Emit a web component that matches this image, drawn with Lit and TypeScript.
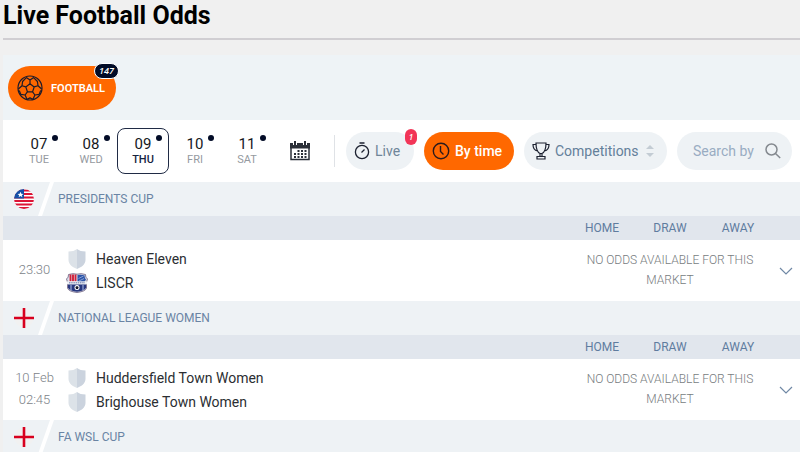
import { LitElement, html, css, svg, nothing } from "lit";
import { customElement, property, state } from "lit/decorators.js";
import { classMap } from "lit/directives/class-map.js";

interface Match { time: string[]; teams: { name: string; crest: string }[]; }
interface League { name: string; flag: string; matches: Match[]; }

const DAYS = [
  { num: "07", day: "TUE" },
  { num: "08", day: "WED" },
  { num: "09", day: "THU" },
  { num: "10", day: "FRI" },
  { num: "11", day: "SAT" },
];

const LEAGUES: League[] = [
  {
    name: "PRESIDENTS CUP",
    flag: "liberia",
    matches: [{ time: ["23:30"], teams: [{ name: "Heaven Eleven", crest: "shield" }, { name: "LISCR", crest: "liscr" }] }],
  },
  {
    name: "NATIONAL LEAGUE WOMEN",
    flag: "england",
    matches: [{ time: ["10 Feb", "02:45"], teams: [{ name: "Huddersfield Town Women", crest: "shield" }, { name: "Brighouse Town Women", crest: "shield" }] }],
  },
  { name: "FA WSL CUP", flag: "england", matches: [] },
];

const ballIcon = html`<svg width="26" height="26" viewBox="0 0 26 26" fill="none" stroke="#1b1b2b" stroke-width="1.2" stroke-linejoin="round" aria-hidden="true">
  <circle cx="13" cy="13" r="12"/>
  <path d="M13 8.8l4.2 3.1-1.6 4.9h-5.2l-1.6-4.9zM13 8.8V4.9M17.2 11.9l3.8-1.2M15.6 16.8l2.3 3.2M10.4 16.8L8.1 20M8.8 11.9L5 10.7M13 4.9L9.3 2.6M13 4.9l3.7-2.3M21 10.7l-.6-4.2-3.7-3.9M21 10.7l3.6 3.3M17.9 20l4.2-.6 1.6-4M17.9 20l-2 4.4M8.1 20l-4.2-.6-1.7-4M8.1 20l2 4.4M5 10.7l.6-4.2 3.7-3.9M5 10.7L1.4 14M10.1 24.4l2.9-1.5 2.9 1.5"/>
</svg>`;

const calendarIcon = html`<svg width="20" height="20" viewBox="0 0 20 20" aria-hidden="true">
  <path d="M1 4.5h18V18.500H1z" fill="#fff" stroke="#2b2f38" stroke-width="1.500"/>
  <path d="M0 2h20v5.500H0z" fill="#2b2f38"/>
  <path d="M5 0v4M15 0v4" stroke="#fff" stroke-width="4"/>
  <path d="M5 0v4M15 0v4" stroke="#2b2f38" stroke-width="2"/>
  <path d="M7.500 10h9M4 13h12.500M4 16h12.500" stroke="#2b2f38" stroke-width="2" stroke-dasharray="2 1.500"/>
</svg>`;

const stopwatchIcon = html`<svg width="16" height="18" viewBox="0 0 16 18" fill="none" stroke="#1c2130" stroke-width="1.300" aria-hidden="true">
  <circle cx="8" cy="10" r="6.600"/><path d="M5.500 1h5M7.500 10.500l3-3"/>
</svg>`;

const clockIcon = html`<svg width="18" height="18" viewBox="0 0 18 18" fill="none" stroke="#2a1a1c" stroke-width="1.400" aria-hidden="true">
  <circle cx="9" cy="9" r="7.700"/><path d="M8.500 4v5.500l3 3"/>
</svg>`;

const trophyIcon = html`<svg width="18" height="18" viewBox="0 0 18 18" fill="none" stroke="#1c2130" stroke-width="1.200" aria-hidden="true">
  <path d="M4 1h10c0 5-1 9-4 10.500H8C5 10 4 6 4 1zM4 2.500H1c0 4 1.500 6 4.500 6.500M14 2.500h3c0 4-1.500 6-4.500 6.500M8 11.500v3M10 11.500v3M5 14.500h8v2.500H5z"/>
</svg>`;

const sortIcon = html`<svg class="sort" width="8" height="12" viewBox="0 0 8 12" fill="#c3ccd4" aria-hidden="true">
  <path d="M4 0l4 4H0zM0 8h8l-4 4z"/>
</svg>`;

const searchIcon = html`<svg width="16" height="16" viewBox="0 0 16 16" fill="none" stroke="#84898f" stroke-width="1.500" aria-hidden="true">
  <circle cx="6.500" cy="6.500" r="5.500"/><path d="M10.500 10.500l4.700 4.500"/>
</svg>`;

const chevronIcon = html`<svg width="14" height="8" viewBox="0 0 14 8" fill="none" stroke="#7088a5" stroke-width="1.200" aria-hidden="true">
  <path d="M1 1l6 6 6-6"/>
</svg>`;

const liberiaFlag = html`<svg width="20" height="20" viewBox="0 0 20 20" aria-hidden="true">
  <clipPath id="disc"><circle cx="10" cy="10" r="10"/></clipPath>
  <g clip-path="url(#disc)">
    <path d="M0 0h20v20H0z" fill="#fff"/>
    <path d="M0 1.500h20M0 5h20M0 8.500h20M0 12h20M0 15.500h20M0 19h20" stroke="#dc1435" stroke-width="1.900"/>
    <path d="M0 0h10v9.500H0z" fill="#1450a8"/>
    <path d="M6.500 2.800l.8 2 2.200.1-1.700 1.300.6 2.100-1.900-1.200-1.900 1.200.6-2.100-1.700-1.300 2.200-.1z" fill="#fff"/>
  </g>
</svg>`;

const englandFlag = html`<svg width="20" height="20" viewBox="0 0 20 20" aria-hidden="true">
  <circle cx="10" cy="10" r="9.500" fill="#f1f1f1"/>
  <path d="M8.700 0h2.600v20H8.700zM0 8.700h20v2.600H0z" fill="#d8001e"/>
</svg>`;

const shieldCrest = html`<svg width="22" height="20" viewBox="0 0 22 20" aria-hidden="true">
  <path d="M11 0C9 1.700 6 2.500 2.500 2.500V11c0 4.500 4.500 7.500 8.500 9z" fill="#dce2e8"/>
  <path d="M11 0c2 1.700 5 2.500 8.500 2.500V11c0 4.500-4.500 7.500-8.500 9z" fill="#cbd3de"/>
</svg>`;

const stripes = [4.5, 7, 9.5].map((x) => svg`<path d="M${x} 1.500v7" stroke="#d0203a" stroke-width="1.900"/>`);
const liscrCrest = html`<svg width="22" height="20" viewBox="0 0 22 20" aria-hidden="true">
  <path d="M2.500 1.500Q7 0 11 1.200 15 0 19.500 1.500q-.3 3 2 4.500l-1 3v6q-1 3.500-9.500 4.500-8.500-1-9.500-4.500V9L.5 6q2.300-1.500 2-4.500z" fill="#dde1ec" stroke="#67597a" stroke-width=".8"/>
  ${stripes}
  <path d="M11.500 2q4-.5 7 .2 0 3 1.500 4.300L18.500 9h-7z" fill="#2d55a8"/>
  <path d="M12.500 5.500l5-2.500M13 8l5-2.500" stroke="#9fb4df" stroke-width=".8"/>
  <path d="M1 8.300h20v3H1z" fill="#eef0f5"/>
  <path d="M3 9.800h16" stroke="#6474a5" stroke-dasharray="1.500 .7"/>
  <path d="M2 11.500h18v3.300q-1.500 3-9 4-7.500-1-9-4z" fill="#27377f"/>
  <path d="M5 12v5M17 12v5" stroke="#8294c8" stroke-width="1.500"/>
  <circle cx="11" cy="14.500" r="2.500" fill="#fff"/>
  <path d="M11 12.900l1.600 1.200-.6 1.800h-2l-.6-1.800z" fill="#15182a"/>
</svg>`;

const base = css`
  * { box-sizing: border-box; }
  button, input, select { font: inherit; color: inherit; border: 0; background: none; padding: 0; margin: 0; cursor: pointer; }
  svg { display: block; flex: none; }
`;

@customElement("league-block")
export class LeagueBlock extends LitElement {
  @property({ attribute: false }) league!: League;

  static styles = [base, css`
    :host { display: block; }
    .head { display: flex; align-items: stretch; height: 34px; background: #eef2f5; }
    .flag { width: 35px; display: flex; align-items: center; padding-left: 11px; }
    .slash { width: 16px; color: #fff; }
    .name { margin: 0; padding-left: 4px; font-size: 12px; font-weight: 400; line-height: 34px; color: #6a84a4; }
    .odds { width: 100%; table-layout: fixed; border-collapse: collapse; background: #fff; }
    .odds th, .odds td { padding: 0; }
    .odds th { height: 24px; background: #e1e6ed; font-size: 12px; font-weight: 400; color: #5f7c9f; }
    .odds td { height: 61px; }
    .time-col { width: 63px; }
    .odd-col { width: 68px; }
    .more-col { width: 28px; }
    .odds .time { padding-bottom: 2px; text-align: center; font-size: 13px; font-weight: 300; line-height: 22px; color: #7c8288; }
    .team { display: flex; align-items: center; gap: 8px; height: 24px; font-size: 14px; color: #2b2e32; }
    .odds .none { padding-bottom: 2px; text-align: center; font-size: 12px; font-weight: 300; line-height: 20px; color: #777c80; }
    .more { display: flex; align-items: center; justify-content: center; width: 28px; height: 28px; }
  `];

  render() {
    const { name, flag, matches } = this.league;
    return html`
      <header class="head">
        <span class="flag">${flag === "liberia" ? liberiaFlag : englandFlag}</span>
        <svg class="slash" width="16" height="34" viewBox="0 0 16 34" aria-hidden="true"><path d="M12 0h4L4 34H0z" fill="currentColor"/></svg>
        <h2 class="name">${name}</h2>
      </header>
      ${matches.length ? html`
        <table class="odds">
          <colgroup><col class="time-col"><col><col class="odd-col"><col class="odd-col"><col class="odd-col"><col class="more-col"></colgroup>
          <thead><tr><th></th><th></th><th scope="col">HOME</th><th scope="col">DRAW</th><th scope="col">AWAY</th><th></th></tr></thead>
          <tbody>${matches.map((m) => html`
            <tr>
              <td class="time">${m.time.map((t) => html`<div>${t}</div>`)}</td>
              <td>${m.teams.map((t) => html`<div class="team">${t.crest === "liscr" ? liscrCrest : shieldCrest}<span>${t.name}</span></div>`)}</td>
              <td class="none" colspan="3">NO ODDS AVAILABLE FOR THIS MARKET</td>
              <td><button class="more" aria-label="Show match">${chevronIcon}</button></td>
            </tr>`)}
          </tbody>
        </table>` : nothing}
    `;
  }
}

@customElement("app-root")
export class AppRoot extends LitElement {
  @state() private selected = 2;

  static styles = [base, css`
    :host { display: block; min-height: 100vh; padding-left: 3px; background: #f0f0f0; font-family: Roboto, "Liberation Sans", sans-serif; overflow: hidden; }
    .title { margin: 0; height: 40px; padding-top: 1px; border-bottom: 2px solid #d0ced2; font-size: 25px; line-height: 30px; font-weight: 700; color: #000; white-space: nowrap; }
    .sports { margin-top: 15px; padding: 11px 5px 10px; background: #eef3f6; }
    .sport { position: relative; display: flex; align-items: center; gap: 8px; height: 44px; padding: 0 11px 0 9px; border-radius: 22px; background: #ff6800; color: #fff; font-size: 11px; font-weight: 600; }
    .count { position: absolute; top: -3px; right: -3px; padding: 0 4px; border: 1px solid #fff; border-radius: 8px; background: #020c27; font: italic 600 9px/14px "Open Sans", sans-serif; }
    .filters { display: flex; align-items: center; height: 62px; padding: 0 8px 0 10px; background: #fff; }
    .day { position: relative; width: 52px; height: 46px; border: 1px solid transparent; border-radius: 8px; color: #15181d; font-size: 15px; line-height: 18px; }
    .day span { display: block; font-size: 11px; line-height: 14px; color: #959a9f; }
    .day::after { content: ""; position: absolute; top: 6px; right: 6px; width: 6px; height: 6px; border-radius: 3px; background: #020c27; }
    .on { border-color: #202b45; }
    .on span { color: #16243f; font-weight: 500; }
    .calendar { margin-left: 17px; }
    .rule { width: 1px; height: 32px; margin: 0 11px 0 24px; background: #dfe2e6; }
    .pills { display: flex; flex: 1; min-width: 0; gap: 10px; }
    .pill { position: relative; display: flex; align-items: center; gap: 5px; height: 38px; padding: 0 8px; border-radius: 19px; background: #eef2f5; color: #6f8599; font-size: 14px; white-space: nowrap; }
    .live { width: 68px; }
    .active { width: 90px; background: #ff6800; color: #fff; font-weight: 500; }
    .alert { position: absolute; top: -3px; right: -3px; width: 12px; height: 16px; border-radius: 6px; background: #f23557; color: #fff; font: italic 600 8px/16px "Open Sans", sans-serif; text-align: center; }
    .competitions { width: 143px; color: #64809a; }
    .select { flex: 1; min-width: 0; appearance: none; height: 38px; outline-offset: -4px; }
    .sort { margin-right: 5px; }
    .search { flex: 1; min-width: 0; padding: 0 11px 0 16px; }
    .field { flex: 1; width: 0; min-width: 0; height: 38px; cursor: text; appearance: none; }
    .field::-webkit-search-cancel-button { display: none; }
    .field::placeholder { color: #99acc2; opacity: 1; }
  `];

  render() {
    return html`
      <h1 class="title">Live Football Odds</h1>
      <nav class="sports">
        <button class="sport">${ballIcon}FOOTBALL<span class="count">147</span></button>
      </nav>
      <section class="filters">
        ${DAYS.map((d, i) => html`
          <button class=${classMap({ day: true, on: i === this.selected })} @click=${() => { this.selected = i; }}>${d.num}<span>${d.day}</span></button>`)}
        <button class="calendar" aria-label="Choose a date">${calendarIcon}</button>
        <div class="rule"></div>
        <div class="pills">
          <button class="pill live">${stopwatchIcon}Live<span class="alert">1</span></button>
          <button class="pill active">${clockIcon}By time</button>
          <label class="pill competitions">${trophyIcon}
            <select class="select" aria-label="Competitions"><option>Competitions</option></select>
            ${sortIcon}
          </label>
          <label class="pill search"><input class="field" type="search" placeholder="Search by" aria-label="Search by">${searchIcon}</label>
        </div>
      </section>
      <main>${LEAGUES.map((l) => html`<league-block .league=${l}></league-block>`)}</main>
    `;
  }
}
